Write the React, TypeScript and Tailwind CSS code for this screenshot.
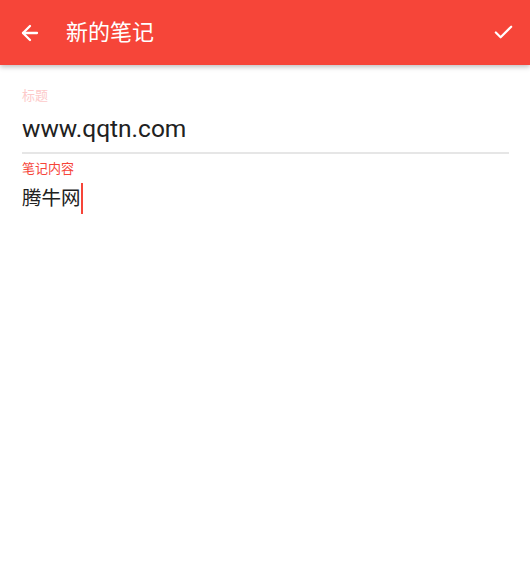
import { ArrowLeft, Check } from 'lucide-react';

const font = { fontFamily: 'Roboto, "Noto Sans CJK SC", sans-serif' };

export default function App() {
  return (
    <div className="w-[530px] h-[584px] bg-white relative overflow-hidden" style={font}>
      <header className="h-[65px] bg-[#f64539] flex items-center relative z-10 shadow-[0_2px_5px_rgba(0,0,0,0.25)]">
        <button className="w-[40px] h-[40px] ml-[10px] flex items-center justify-center text-white">
          <ArrowLeft className="w-[24px] h-[24px]" strokeWidth={2.3} />
        </button>
        <h1 className="ml-[16px] text-white text-[22px] leading-none">新的笔记</h1>
        <button className="ml-auto mr-[7px] w-[40px] h-[40px] flex items-center justify-center text-white">
          <Check className="w-[23px] h-[23px]" strokeWidth={2.3} />
        </button>
      </header>

      <div className="px-[22px] pr-[21px] pt-[23px]">
        <label className="block text-[13px] leading-[16px] text-[#fdcaca]">标题</label>
        <div className="mt-[11px] text-[24.5px] leading-[28px] text-[#212121]">www.qqtn.com</div>
        <div className="mt-[9px] h-[2px] bg-[#e6e6e6]" />

        <label className="block mt-[7px] text-[13px] leading-[16px] text-[#f64539]">笔记内容</label>
        <div className="mt-[6px] flex items-center text-[19.5px] leading-[28px] text-[#212121]">
          <span>腾牛网</span>
          <span className="w-[2px] h-[31px] bg-[#f64539]" />
        </div>
      </div>
    </div>
  );
}
